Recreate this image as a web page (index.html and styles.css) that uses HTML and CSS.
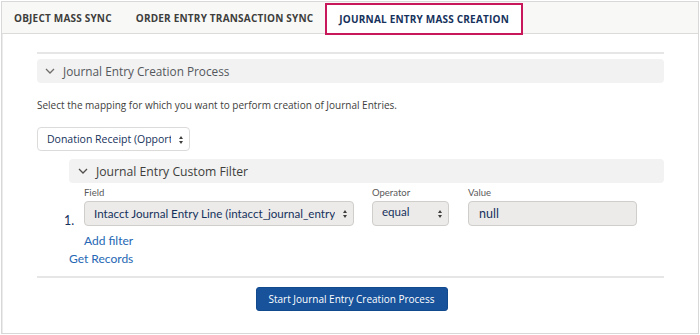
FILE: index.html
```html
<!DOCTYPE html>
<html>
<head>
<meta charset="utf-8">
<link rel="stylesheet" href="styles.css">
</head>
<body>
<div class="frame">
  <div class="tabs">
    <div class="tab">OBJECT MASS SYNC</div>
    <div class="tab">ORDER ENTRY TRANSACTION SYNC</div>
    <div class="tab active">JOURNAL ENTRY MASS CREATION</div>
  </div>
  <div class="content">
    <div class="rule"></div>
    <div class="section-head">
      <svg class="chev" viewBox="0 0 10 6" width="10" height="6"><path d="M1 1 L5 5 L9 1" fill="none" stroke="#706e6b" stroke-width="1.3"/></svg>
      <span>Journal Entry Creation Process</span>
    </div>
    <p class="intro">Select the mapping for which you want to perform creation of Journal Entries.</p>
    <div class="select mapping">
      <span class="sel-text">Donation Receipt (Opportunity)</span>
      <svg class="updown" viewBox="0 0 6 10" width="6" height="10"><path d="M3 1 L5 4 H1 Z M3 9 L5 6 H1 Z" fill="#3e3e3c"/></svg>
    </div>
    <div class="sub">
      <div class="section-head sub-head">
        <svg class="chev" viewBox="0 0 10 6" width="10" height="6"><path d="M1 1 L5 5 L9 1" fill="none" stroke="#514f4d" stroke-width="1.3"/></svg>
        <span>Journal Entry Custom Filter</span>
      </div>
      <div class="filter-row">
        <span class="num">1.</span>
        <div class="fld field">
          <label>Field</label>
          <div class="select grey">
            <span class="sel-text">Intacct Journal Entry Line (intacct_journal_entry_line)</span>
            <svg class="updown" viewBox="0 0 6 10" width="6" height="10"><path d="M3 1 L5 4 H1 Z M3 9 L5 6 H1 Z" fill="#3e3e3c"/></svg>
          </div>
        </div>
        <div class="fld op">
          <label>Operator</label>
          <div class="select grey opsel">
            <span class="sel-text">equal</span>
            <svg class="updown" viewBox="0 0 6 10" width="6" height="10"><path d="M3 1 L5 4 H1 Z M3 9 L5 6 H1 Z" fill="#3e3e3c"/></svg>
          </div>
        </div>
        <div class="fld val">
          <label>Value</label>
          <div class="input grey">null</div>
        </div>
      </div>
      <a class="link add">Add filter</a>
    </div>
    <a class="link get">Get Records</a>
    <div class="rule bottom"></div>
    <div class="actions">
      <button class="btn">Start Journal Entry Creation Process</button>
    </div>
  </div>
</div>
</body>
</html>
```
FILE: styles.css
```css
* { box-sizing: border-box; }
html, body { margin: 0; padding: 0; background: #fff; }
body { font-family: "Open Sans", "Liberation Sans", sans-serif; color: #3e3e3c; }
.frame {
  margin: 1px 0 0 1px;
  width: 698px;
  height: 333px;
  border: 1px solid #d8d8d8;
  box-shadow: inset 1px 1px 0 #ececec;
  overflow: hidden;
}
.tabs {
  display: flex;
  height: 32px;
  background: #f8f8f7;
  border-bottom: 1px solid #dddbda;
}
.tab {
  padding: 0 12px;
  height: 31px;
  display: flex;
  align-items: center;
  font-size: 10px;
  font-weight: 700;
  letter-spacing: 0.2px;
  color: #3e3e3c;
}
.tab.active {
  padding: 0 12px;
  height: 32px;
  margin-top: 1px;
  background: #fff;
  border: 2px solid #c9175b;
  color: #16325c;
}
.content {
  padding: 18px 34px 0 35px;
}
.rule { height: 2px; background: #e6e6e6; }
.section-head {
  margin-top: 5px;
  height: 24px;
  background: #f2f2f2;
  border-radius: 4px;
  display: flex;
  align-items: center;
  padding-left: 8px;
  font-size: 11.8px;
  color: #54585c;
}
.section-head .chev { margin-right: 8px; }
.intro {
  margin: 14px 0 0;
  font-size: 10px;
  line-height: 16px;
  color: #3e3e3c;
}
.select {
  position: relative;
  display: flex;
  align-items: center;
  height: 24px;
  border: 1px solid #dddbda;
  border-radius: 4px;
  background: #fff;
  padding: 0 18px 0 9px;
  overflow: hidden;
}
.sel-text { white-space: nowrap; overflow: hidden; font-size: 10.5px; }
.updown { position: absolute; right: 5px; top: 7px; }
.mapping { margin-top: 14px; width: 153px; }
.mapping .sel-text { color: #16325c; }
.sub { margin-left: 32px; margin-top: 8px; }
.sub-head { margin-top: 0; color: #3e3e3c; font-size: 12.2px; padding-left: 9px; }
.filter-row {
  display: flex;
  align-items: flex-end;
  margin-top: 4px;
}
.num {
  font-family: Lato, "Liberation Sans", sans-serif;
  font-size: 12.5px;
  line-height: 14px;
  color: #16325c;
  width: 20px;
  margin-left: -5px;
  margin-bottom: -2px;
}
.fld { display: flex; flex-direction: column; }
.fld label {
  font-family: Lato, "Liberation Sans", sans-serif;
  font-size: 9.5px;
  color: #5a5a5a;
  line-height: 12px;
  margin-bottom: 2px;
}
.grey { background: #ecebea; border-color: #d0cecb; font-family: Lato, "Liberation Sans", sans-serif; color: #16325c; }
.grey .sel-text { font-size: 11.6px; color: #16325c; }
.field { width: 270px; }
.field .select { padding-left: 9px; height: 25px; }
.op { width: 77px; margin-left: 18px; }
.opsel { height: 25px; align-items: flex-start; padding-top: 3px; }
.val { width: 169px; margin-left: 19px; }
.input {
  height: 25px;
  border: 1px solid #d0cecb;
  border-radius: 4px;
  padding: 4px 0 0 10px;
  font-size: 12.5px;
}
.link {
  display: block;
  color: #2567b4;
  font-size: 11.5px;
  cursor: pointer;
}
.add { font-family: Lato, "Liberation Sans", sans-serif; margin: 7px 0 0 15px; font-size: 12px; }
.get { margin: 3px 0 0 32px; font-family: Lato, "Liberation Sans", sans-serif; font-size: 12px; }
.bottom { margin-top: 10px; }
.actions { display: flex; justify-content: center; padding-top: 9px; }
.btn {
  width: 192px;
  height: 24px;
  background: #17529b;
  color: #fff;
  border: 1px solid #124a8e;
  border-radius: 3px;
  font-family: "Open Sans", "Liberation Sans", sans-serif;
  font-size: 10px;
  padding: 0;
  margin-left: 2px;
}
```
